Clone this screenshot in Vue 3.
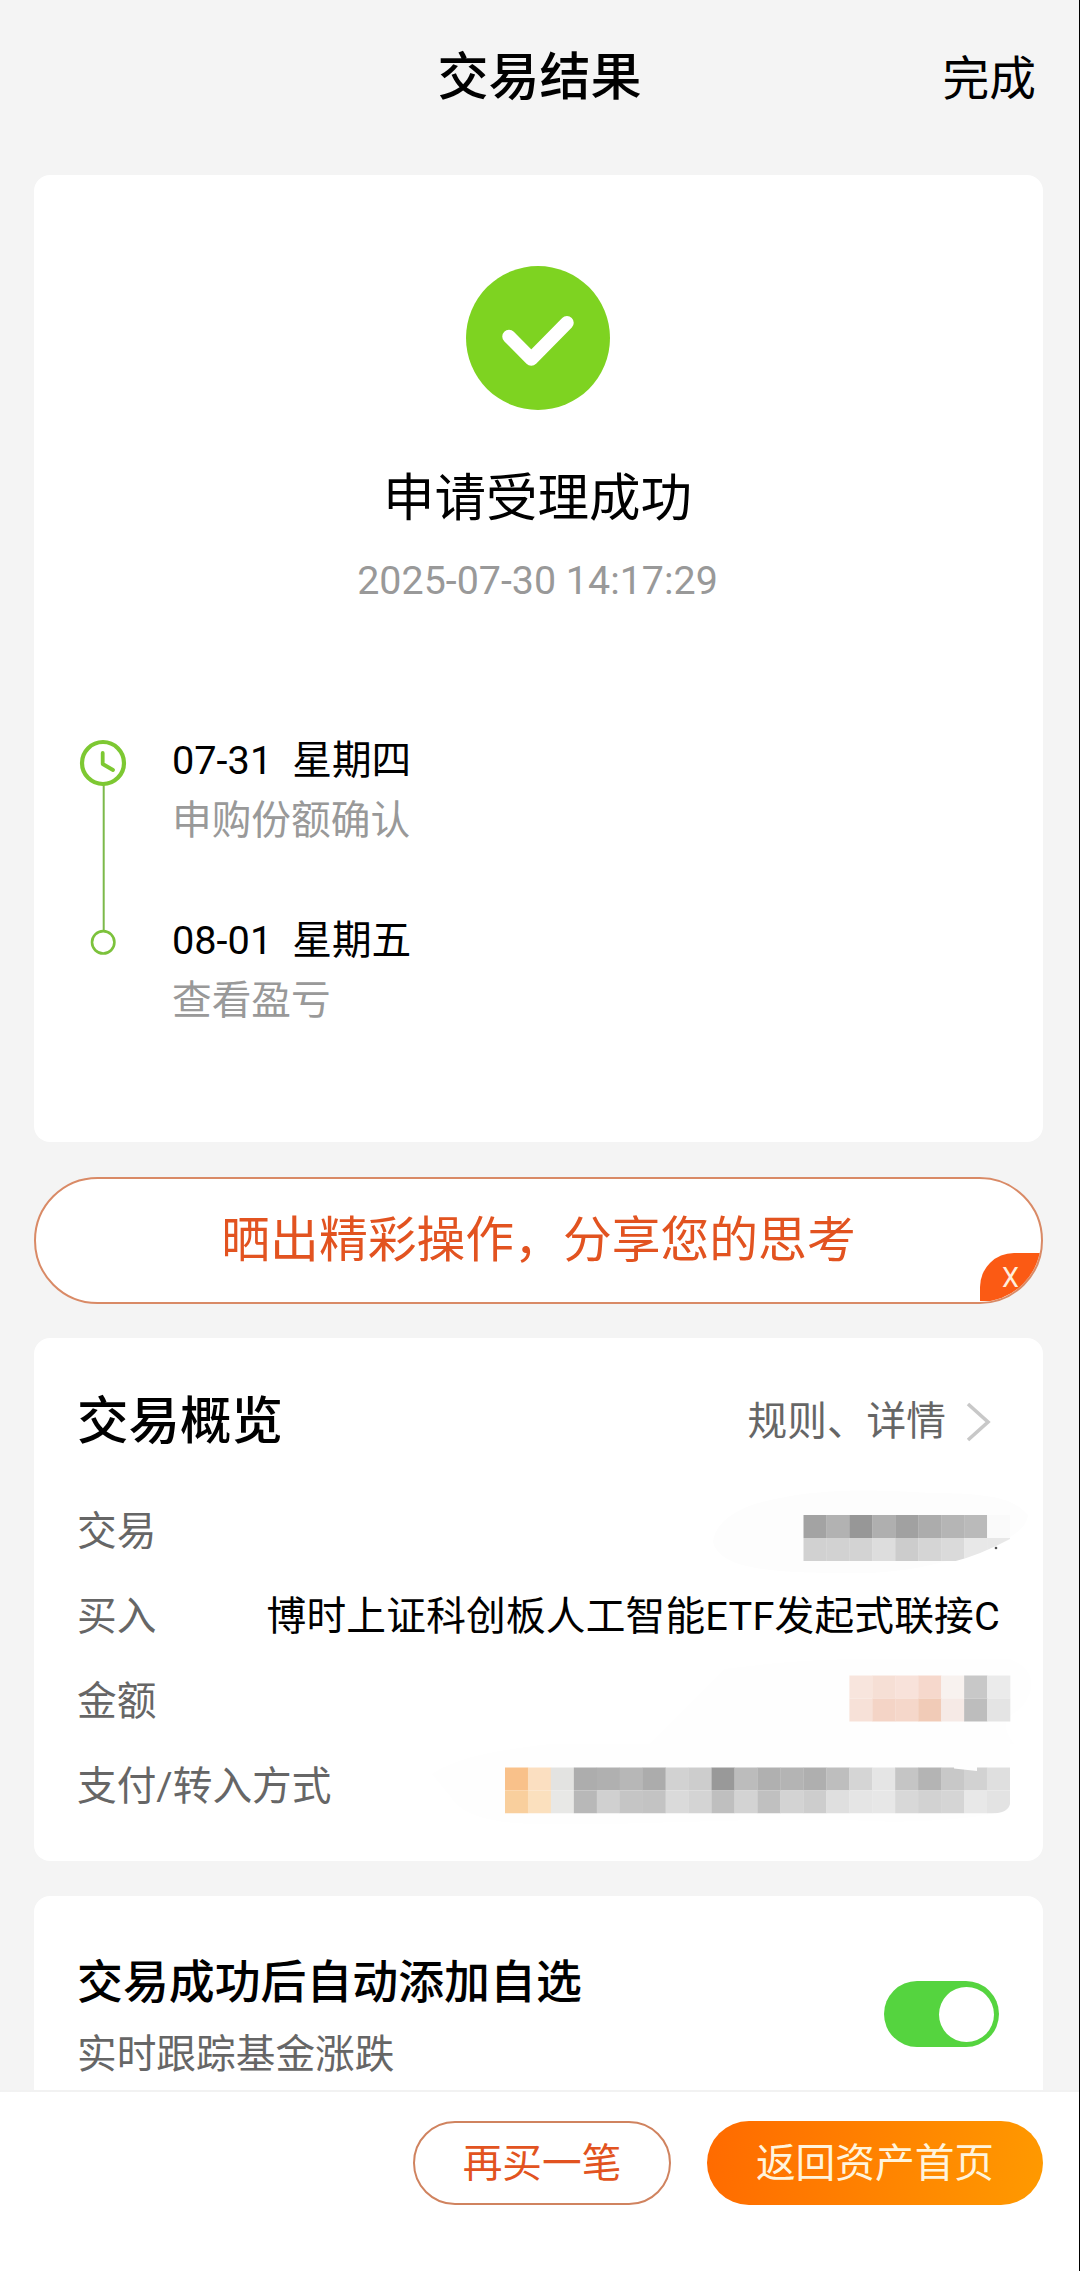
<script setup>
import { ref } from 'vue'

const autoAdd = ref(true)
const showShare = ref(true)

const steps = [
  { date: '07-31', week: '星期四', label: '申购份额确认' },
  { date: '08-01', week: '星期五', label: '查看盈亏' }
]

// masked values, two rows of blocks each
const masks = {
  trade: [
    ['#a3a3a3', '#b2b2b2', '#979797', '#afafaf', '#a1a1a1', '#acacac', '#b5b5b5', '#bababa', '#fafafa'],
    ['#d1d1d1', '#d2d2d2', '#d3d3d3', '#dddddd', '#cccccc', '#d5d5d5', '#dadada', '#e8e8e8', '#e8e8e8']
  ],
  amount: [
    ['#f8e5dd', '#f6dfd5', '#f8e2da', '#f6d8cc', '#f8f2ef', '#c8c8c8', '#ebebeb'],
    ['#f7e1d8', '#f4d4c6', '#f5d7ca', '#f1cbb7', '#f6eae6', '#bdbdbd', '#e4e4e4']
  ],
  pay: [
    ['#f9c18a', '#fbdfc1', '#e3e3e1', '#adadad', '#b0b0b0', '#b7b7b7', '#acacac', '#d2d2d2', '#cdcdcd', '#999999', '#bcbcbc', '#b0b0b0', '#b4b4b4', '#afafaf', '#bebebe', '#d5d5d5', '#e5e5e5', '#c5c5c5', '#b4b4b4', '#c8c8c8', '#d2d2d2', '#dfdfdf'],
    ['#f9cf9d', '#fbe0be', '#e8e8e6', '#b8b8b8', '#d0d0d0', '#c5c5c5', '#c3c3c3', '#dadada', '#d4d4d4', '#bfbfbf', '#d3d3d3', '#c0c0c0', '#d3d3d3', '#cdcdcd', '#dfdfdf', '#e5e5e5', '#e7e7e7', '#d8d8d8', '#d2d2d2', '#d5d5d5', '#e8e8e8', '#e3e3e3']
  ]
}
</script>

<template>
  <div class="page">
    <header class="header">
      <h1 class="header-title">交易结果</h1>
      <a class="header-done">完成</a>
    </header>

    <main class="content">
      <section class="card result">
        <svg class="result-icon" viewBox="0 0 144 144">
          <circle cx="72" cy="72" r="72" fill="#7ed321" />
          <path d="M43 70.5 65.3 93 101 56.7" fill="none" stroke="#fff" stroke-width="13.5" stroke-linecap="round" stroke-linejoin="round" />
        </svg>
        <h2 class="result-title">申请受理成功</h2>
        <p class="result-time">2025-07-30 14:17:29</p>

        <div class="timeline">
          <svg class="timeline-rail" width="50" height="210" viewBox="0 0 50 210">
            <path d="M25.7 47V192" stroke="#7cb94a" stroke-width="2" />
            <circle cx="25" cy="25" r="21" fill="#fff" stroke="#7dc832" stroke-width="4.2" />
            <path d="M24.7 15V26L35 32" fill="none" stroke="#7dc832" stroke-width="3.8" stroke-linecap="round" stroke-linejoin="round" />
            <circle cx="25.2" cy="204.3" r="11.2" fill="#fff" stroke="#7cc23c" stroke-width="2.6" />
          </svg>
          <ul class="steps">
            <li v-for="step in steps" :key="step.date" class="step">
              <p class="step-date"><span>{{ step.date }}</span><span>{{ step.week }}</span></p>
              <p class="step-label">{{ step.label }}</p>
            </li>
          </ul>
        </div>
      </section>

      <section v-if="showShare" class="share">
        <span>晒出精彩操作，分享您的思考</span>
        <button class="share-close" @click="showShare = false">X</button>
      </section>

      <section class="card overview">
        <div class="overview-head">
          <h3 class="overview-title">交易概览</h3>
          <a class="overview-more">
            规则、详情
            <svg width="26" height="40" viewBox="0 0 26 40">
              <path d="M2 2 22 20 2 38" fill="none" stroke="#c8c8c8" stroke-width="3.6" />
            </svg>
          </a>
        </div>

        <div class="row">
          <span class="row-label">交易</span>
          <svg class="mask" width="300" height="85" viewBox="0 0 300 85">
            <defs>
              <clipPath id="trade-edge">
                <path d="M0 0H300V50Q270 66 244 72.5H0Z" />
              </clipPath>
            </defs>
            <path d="M3 52C6 34 24 18 65 10C110 0 165 0 220 4C290 4 305 12 318 26C316 42 298 50 270 62C230 76 190 84 150 84C80 84 8 84 3 52Z" fill="#fdfdfd" />
            <g clip-path="url(#trade-edge)">
              <template v-for="(line, r) in masks.trade" :key="r">
                <rect v-for="(color, i) in line" :key="i" :x="93.5 + i * 22.95" :y="26 + r * 23" width="23.2" height="23" :fill="color" />
              </template>
            </g>
            <circle cx="286" cy="59" r="1.3" fill="#555" />
          </svg>
        </div>
        <div class="row">
          <span class="row-label">买入</span>
          <span class="row-value">博时上证科创板人工智能ETF发起式联接C</span>
        </div>
        <div class="row">
          <span class="row-label">金额</span>
          <svg class="mask" width="300" height="85" viewBox="0 0 300 85">
            <path d="M14 10C60 4 110 0 150 0H300C325 10 328 30 310 50C296 58 290 66 304 85H-60Z" fill="#fefefe" />
            <template v-for="(line, r) in masks.amount" :key="r">
              <rect v-for="(color, i) in line" :key="i" :x="139.4 + i * 22.95" :y="16.5 + r * 23" width="23.2" height="23" :fill="color" />
            </template>
          </svg>
        </div>
        <div class="row">
          <span class="row-label">支付/转入方式</span>
          <svg class="mask" width="580" height="85" viewBox="0 0 580 85">
            <defs>
              <clipPath id="pay-edge">
                <path d="M0 0H580V60Q578 69 562 69.5H0Z" />
              </clipPath>
            </defs>
            <path d="M2 30C30 12 70 6 120 0H580V66C540 76 480 80 420 76C300 74 200 82 110 80C60 80 30 70 20 52Z" fill="#fefefe" />
            <g clip-path="url(#pay-edge)">
              <template v-for="(line, r) in masks.pay" :key="r">
                <rect v-for="(color, i) in line" :key="i" :x="75 + i * 22.95" :y="23.5 + r * 23" width="23.2" height="23" :fill="color" />
              </template>
            </g>
            <path d="M524 22H547V27L524 24.5Z" fill="#fefefe" />
          </svg>
        </div>
      </section>

      <section class="card auto">
        <div>
          <h3 class="auto-title">交易成功后自动添加自选</h3>
          <p class="auto-desc">实时跟踪基金涨跌</p>
        </div>
        <button class="switch" :class="{ 'on': autoAdd }" @click="autoAdd = !autoAdd">
          <span class="switch-knob"></span>
        </button>
      </section>
    </main>

    <footer class="footer">
      <button class="btn btn-outline">再买一笔</button>
      <button class="btn btn-primary">返回资产首页</button>
    </footer>
  </div>
</template>

<style>
body {
  margin: 0;
  background: #f4f4f4;
}
</style>

<style scoped>
* {
  box-sizing: border-box;
}

h1,
h2,
h3,
p,
ul {
  margin: 0;
  padding: 0;
  list-style: none;
  font-weight: 400;
}

button {
  padding: 0;
  border: none;
  font-family: inherit;
  cursor: pointer;
}

.page {
  display: flex;
  flex-direction: column;
  height: 2271px;
  overflow: hidden;
  background: #f4f4f4;
  border-right: 1px solid #000;
  color: #000;
  font-family: Roboto, 'Noto Sans CJK SC', sans-serif;
  font-size: 39.7px;
  line-height: 56px;
  white-space: nowrap;
}

.header {
  flex: none;
  display: grid;
  grid-template-columns: 1fr auto 1fr;
  align-items: center;
  height: 175px;
  padding: 0 43px 19px;
}

.header-title {
  grid-column: 2;
  font-size: 51px;
  font-weight: 500;
}

.header-done {
  justify-self: end;
  padding-top: 2px;
  font-size: 46.7px;
}

.content {
  flex: 1;
  min-height: 0;
  overflow: hidden;
  display: flex;
  flex-direction: column;
  gap: 35px;
  padding: 0 36px 0 34px;
}

.card {
  flex: none;
  background: #fff;
  border-radius: 16px;
}

.result {
  display: flex;
  flex-direction: column;
  align-items: center;
  height: 967px;
  padding: 91px 2px 0 0;
}

.result-icon {
  width: 144px;
  height: 144px;
}

.result-title {
  margin-top: 61px;
  font-size: 51.5px;
}

.result-time {
  margin-top: 26px;
  color: #999;
  font-size: 39.4px;
}

.timeline {
  align-self: stretch;
  display: flex;
  margin-top: 122px;
  padding-left: 44px;
}

.timeline-rail {
  flex: none;
  margin-top: 7px;
  overflow: visible;
}

.steps {
  display: flex;
  flex-direction: column;
  gap: 60px;
  margin-left: 44px;
}

.step {
  height: 120px;
}

.step-date {
  display: flex;
  gap: 20px;
  line-height: 60px;
}

.step-label {
  color: #999;
  line-height: 60px;
}

.share {
  position: relative;
  flex: none;
  display: flex;
  align-items: center;
  justify-content: center;
  height: 127px;
  margin-bottom: -1px;
  overflow: hidden;
  background: #fff;
  border: 2px solid #d98a66;
  border-radius: 64px;
  color: #e25320;
  font-size: 48.8px;
}

.share-close {
  position: absolute;
  right: 0;
  bottom: 1px;
  width: 61px;
  height: 48px;
  background: #fb5a14;
  border-radius: 34px 0 0 0;
  color: #ffeedd;
  font-size: 27px;
  line-height: 50px;
}

.overview {
  height: 523px;
  padding: 54px 43px 0;
}

.overview-head {
  display: flex;
  align-items: center;
  justify-content: space-between;
  height: 60px;
  margin-bottom: 37px;
}

.overview-title {
  font-size: 51.5px;
  font-weight: 500;
}

.overview-more {
  display: flex;
  align-items: center;
  gap: 20px;
  margin-right: 8px;
  color: #666;
}

.row {
  display: flex;
  align-items: center;
  justify-content: space-between;
  height: 85px;
}

.row-label {
  color: #666;
}

.row-value {
  letter-spacing: 0.2px;
}

.mask {
  flex: none;
  margin-right: -10px;
  overflow: visible;
}

.auto {
  display: flex;
  align-items: flex-start;
  justify-content: space-between;
  height: 260px;
  padding: 54px 44px 0 43px;
}

.auto-title {
  font-size: 45.9px;
  font-weight: 500;
  line-height: 64px;
}

.auto-desc {
  margin-top: 13px;
  color: #666;
}

.switch {
  display: flex;
  align-items: center;
  width: 115px;
  height: 66px;
  margin-top: 31px;
  padding: 0 5.5px;
  background: #ccc;
  border-radius: 33px;
}

.switch.on {
  justify-content: flex-end;
  background: #55d43f;
}

.switch-knob {
  width: 55px;
  height: 55px;
  background: #fff;
  border-radius: 50%;
}

.footer {
  flex: none;
  display: flex;
  justify-content: flex-end;
  gap: 36px;
  height: 181px;
  padding: 29px 36px 0;
  background: #fff;
  border-top: 2px solid #f2f2f2;
}

.btn {
  height: 84px;
  padding-bottom: 7px;
  border-radius: 42px;
  font-size: 39.7px;
}

.btn-outline {
  width: 258px;
  background: #fff;
  border: 2px solid #d0835f;
  color: #e25320;
}

.btn-primary {
  width: 336px;
  background: linear-gradient(100deg, #ff6a00, #ff9a00);
  color: #fff4dc;
}
</style>
